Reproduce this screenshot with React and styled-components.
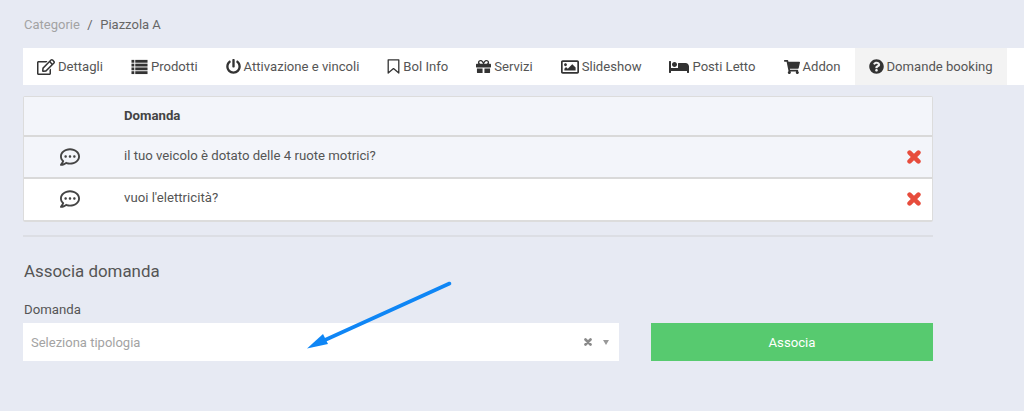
import React from 'react'
import styled, { createGlobalStyle } from 'styled-components'
import {
  FaRegEdit,
  FaPowerOff,
  FaGift,
  FaRegImage,
  FaBed,
  FaShoppingCart,
  FaQuestionCircle,
  FaRegCommentDots,
} from 'react-icons/fa'

const GlobalStyle = createGlobalStyle`
  html, body {
    margin: 0;
    padding: 0;
    background: #e7eaf3;
    font-family: Roboto, "Liberation Sans", sans-serif;
    color: #555;
  }
  * { box-sizing: border-box; }
`

const Page = styled.div`
  position: relative;
  width: 1024px;
  height: 411px;
  overflow: hidden;
  padding: 16px 0 0 23px;
`

const Breadcrumb = styled.div`
  display: flex;
  align-items: center;
  gap: 7.5px;
  height: 17px;
  padding-left: 1px;
  font-size: 13px;
  line-height: 17px;
  color: #666;
`

const Crumb = styled.span`
  color: ${(p) => (p.$muted ? '#a3a3a3' : '#666')};
`

const Tabs = styled.nav`
  display: flex;
  height: 37px;
  margin-top: 15px;
  background: #fff;
`

const Tab = styled.div`
  display: flex;
  align-items: center;
  gap: 3px;
  padding: 0 14px;
  font-size: 13.1px;
  white-space: nowrap;
  color: #555;
  background: ${(p) => (p.$active ? '#f3f3f3' : 'transparent')};
  svg {
    color: #333;
    flex: none;
  }
`

const Content = styled.div`
  width: 910px;
`

const Table = styled.div`
  margin-top: 11px;
  border: 2px solid #dcdcdc;
  border-width: 1px 1px 2px 1px;
  border-radius: 2px;
  font-size: 13.2px;
`

const Row = styled.div`
  display: grid;
  grid-template-columns: 100px 1fr 25px;
  align-items: center;
  height: ${(p) => p.$h}px;
  padding-bottom: ${(p) => (p.$last ? '2px' : '0')};
  background: ${(p) => (p.$white ? '#fff' : '#f3f5fa')};
  border-bottom: ${(p) => (p.$last ? 'none' : '2px solid #d9d9d9')};
`

const IconCell = styled.div`
  display: flex;
  justify-content: center;
  padding-right: 9px;
  color: #444;
`

const HeadCell = styled.div`
  font-weight: 700;
  color: #444;
  margin-top: -2px;
`

const TextCell = styled.div`
  color: #555;
  margin-top: -3px;
`

const DeleteCell = styled.div`
  display: flex;
  color: #e74c3c;
`

const Divider = styled.hr`
  margin: 13px 0 0;
  border: 0;
  border-top: 2px solid #dcdee4;
`

const Heading = styled.h3`
  margin: 24px 0 0;
  padding-left: 1px;
  font-size: 16.9px;
  line-height: 20px;
  font-weight: 400;
  color: #555;
`

const Label = styled.div`
  margin-top: 20px;
  padding-left: 1px;
  font-size: 13.2px;
  line-height: 17px;
  color: #555;
`

const FormRow = styled.div`
  display: flex;
  gap: 32px;
  margin-top: 5px;
`

const Select = styled.div`
  display: flex;
  align-items: center;
  width: 596px;
  height: 38px;
  padding: 0 10px 0 8px;
  background: #fff;
  font-size: 13px;
  color: #a3a3a3;
`

const Placeholder = styled.span`
  flex: 1;
`

const Clear = styled.span`
  display: flex;
  color: #8a8a8a;
  margin-right: 11px;
`

const Caret = styled.span`
  width: 0;
  height: 0;
  border-left: 3px solid transparent;
  border-right: 3px solid transparent;
  border-top: 5px solid #999;
`

const Button = styled.button`
  width: 282px;
  height: 38px;
  border: 0;
  background: #57ca6f;
  color: #fff;
  font-family: inherit;
  font-size: 13.2px;
  font-weight: 400;
  padding: 0;
`

const Arrow = styled.svg`
  position: absolute;
  left: 300px;
  top: 275px;
`

// FontAwesome 4 glyphs that react-icons no longer carries in this shape
const ListIcon = ({ size }) => (
  <svg width={size} height={size} viewBox="0 0 17 18" fill="currentColor">
    {[2, 6, 10, 14].map((y) => (
      <g key={y}>
        <rect x="0" y={y} width="3" height="3" />
        <rect x="4" y={y} width="13" height="3" />
      </g>
    ))}
  </svg>
)

const BookmarkIcon = ({ size }) => (
  <svg width={size} height={size + 2} viewBox="0 0 13 15" fill="none" stroke="currentColor" strokeWidth="1.3">
    <path d="M1.2 0.8 H11.8 V14 L6.5 9.6 L1.2 14 Z" strokeLinejoin="round" />
  </svg>
)

const CrossIcon = ({ size }) => (
  <svg width={size} height={size} viewBox="0 0 14 14" stroke="currentColor" strokeWidth="4.6" strokeLinecap="round">
    <path d="M2.6 2.6 L11.4 11.4 M11.4 2.6 L2.6 11.4" />
  </svg>
)

const tabs = [
  { label: 'Dettagli', Icon: FaRegEdit, size: 18 },
  { label: 'Prodotti', Icon: ListIcon, size: 17 },
  { label: 'Attivazione e vincoli', Icon: FaPowerOff, size: 15 },
  { label: 'Bol Info', Icon: BookmarkIcon, size: 13 },
  { label: 'Servizi', Icon: FaGift, size: 15 },
  { label: 'Slideshow', Icon: FaRegImage, size: 18 },
  { label: 'Posti Letto', Icon: FaBed, size: 20 },
  { label: 'Addon', Icon: FaShoppingCart, size: 16 },
  { label: 'Domande booking', Icon: FaQuestionCircle, size: 15, active: true },
]

const questions = [
  { text: 'il tuo veicolo è dotato delle 4 ruote motrici?', h: 42 },
  { text: "vuoi l'elettricità?", h: 41, white: true, last: true },
]

export default function App() {
  return (
    <Page>
      <GlobalStyle />
      <Breadcrumb>
        <Crumb $muted>Categorie</Crumb>
        <span>/</span>
        <Crumb>Piazzola A</Crumb>
      </Breadcrumb>
      <Tabs>
        {tabs.map(({ label, Icon, size, active }) => (
          <Tab key={label} $active={active}>
            <Icon size={size} />
            {label}
          </Tab>
        ))}
      </Tabs>
      <Content>
        <Table>
          <Row $h={40}>
            <div />
            <HeadCell>Domanda</HeadCell>
            <div />
          </Row>
          {questions.map((q) => (
            <Row key={q.text} $h={q.h} $white={q.white} $last={q.last}>
              <IconCell>
                <FaRegCommentDots size={20} />
              </IconCell>
              <TextCell>{q.text}</TextCell>
              <DeleteCell>
                <CrossIcon size={14} />
              </DeleteCell>
            </Row>
          ))}
        </Table>
        <Divider />
        <Heading>Associa domanda</Heading>
        <Label>Domanda</Label>
        <FormRow>
          <Select>
            <Placeholder>Seleziona tipologia</Placeholder>
            <Clear>
              <CrossIcon size={8} />
            </Clear>
            <Caret />
          </Select>
          <Button>Associa</Button>
        </FormRow>
      </Content>
      <Arrow width="160" height="80" viewBox="0 0 160 80">
        <path d="M149.5 8.5 L25 65" stroke="#0f86f5" strokeWidth="3.6" strokeLinecap="round" fill="none" />
        <path d="M7 73.5 L23 59 L28 69 Z" fill="#0f86f5" />
      </Arrow>
    </Page>
  )
}
